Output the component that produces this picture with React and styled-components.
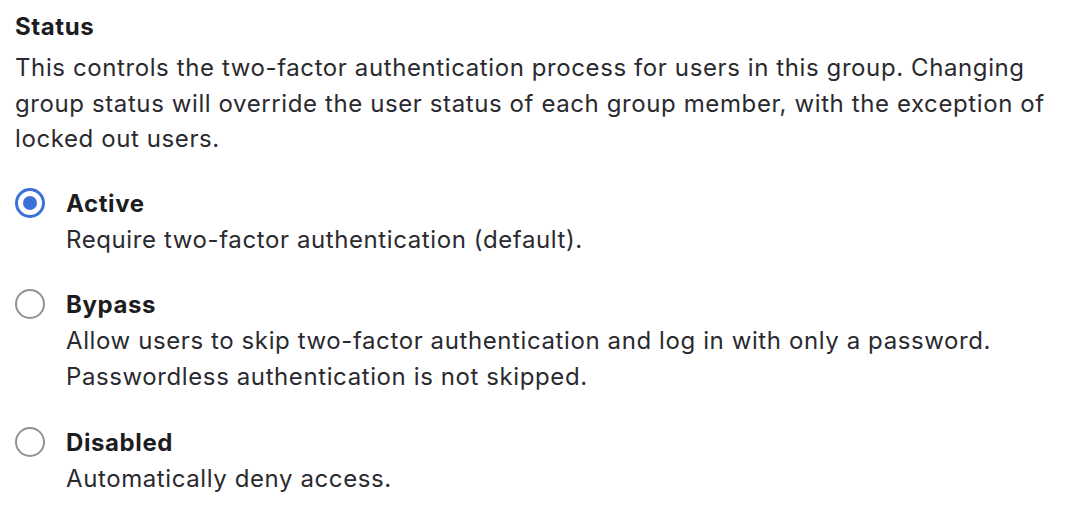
import React from "react";
import styled, { createGlobalStyle } from "styled-components";

const Global = createGlobalStyle`
  html, body { margin: 0; padding: 0; background: #ffffff; }
  body { font-family: Inter, "Noto Sans", sans-serif; color: #1d1d21; }
`;

const Fieldset = styled.div`
  padding: 9px 15px 0 15px;
  display: flex;
  flex-direction: column;
  letter-spacing: 0.6px;
`;

const Legend = styled.div`
  font-size: 24px;
  font-weight: 700;
  line-height: 36px;
  color: #1d1d21;
`;

const Help = styled.p`
  margin: 5px 0 0 0;
  font-size: 24px;
  line-height: 35.5px;
  color: #2a2a30;
  max-width: 1040px;
`;

const Options = styled.div`
  margin-top: 29px;
  display: flex;
  flex-direction: column;
  gap: 29.5px;
`;

const Option = styled.label`
  display: grid;
  grid-template-columns: 30px 1fr;
  column-gap: 21px;
  cursor: pointer;
`;

const Radio = styled.span`
  width: 30px;
  height: 30px;
  box-sizing: border-box;
  border-radius: 50%;
  border: ${(p) => (p.$checked ? "3px solid #3d6fd9" : "2px solid #8e9299")};
  margin-top: 2px;
  display: flex;
  align-items: center;
  justify-content: center;
  &::after {
    content: "";
    width: 14px;
    height: 14px;
    border-radius: 50%;
    background: ${(p) => (p.$checked ? "#3d6fd9" : "transparent")};
  }
`;

const Text = styled.span`
  display: flex;
  flex-direction: column;
`;

const Label = styled.span`
  font-size: 24px;
  font-weight: 700;
  line-height: 36px;
  color: #1d1d21;
`;

const Desc = styled.span`
  font-size: 24px;
  line-height: 36px;
  color: #2a2a30;
`;

const NoBreak = styled.span`
  white-space: nowrap;
`;

const options = [
  { label: "Active", desc: ["Require two-factor authentication (default)."], checked: true },
  {
    label: "Bypass",
    desc: [
      "Allow users to skip two-factor authentication and log in with only a password.",
      "Passwordless authentication is not skipped.",
    ],
  },
  { label: "Disabled", desc: ["Automatically deny access."] },
];

export default function App() {
  return (
    <>
      <Global />
      <Fieldset>
        <Legend>Status</Legend>
        <Help>
          This controls the <NoBreak>two-factor</NoBreak> authentication process for users in this group. Changing
          group status will override the user status of each group member, with the exception of
          locked out users.
        </Help>
        <Options>
          {options.map((o) => (
            <Option key={o.label}>
              <Radio $checked={o.checked} />
              <Text>
                <Label>{o.label}</Label>
                {o.desc.map((d) => (
                  <Desc key={d}>{d}</Desc>
                ))}
              </Text>
            </Option>
          ))}
        </Options>
      </Fieldset>
    </>
  );
}
